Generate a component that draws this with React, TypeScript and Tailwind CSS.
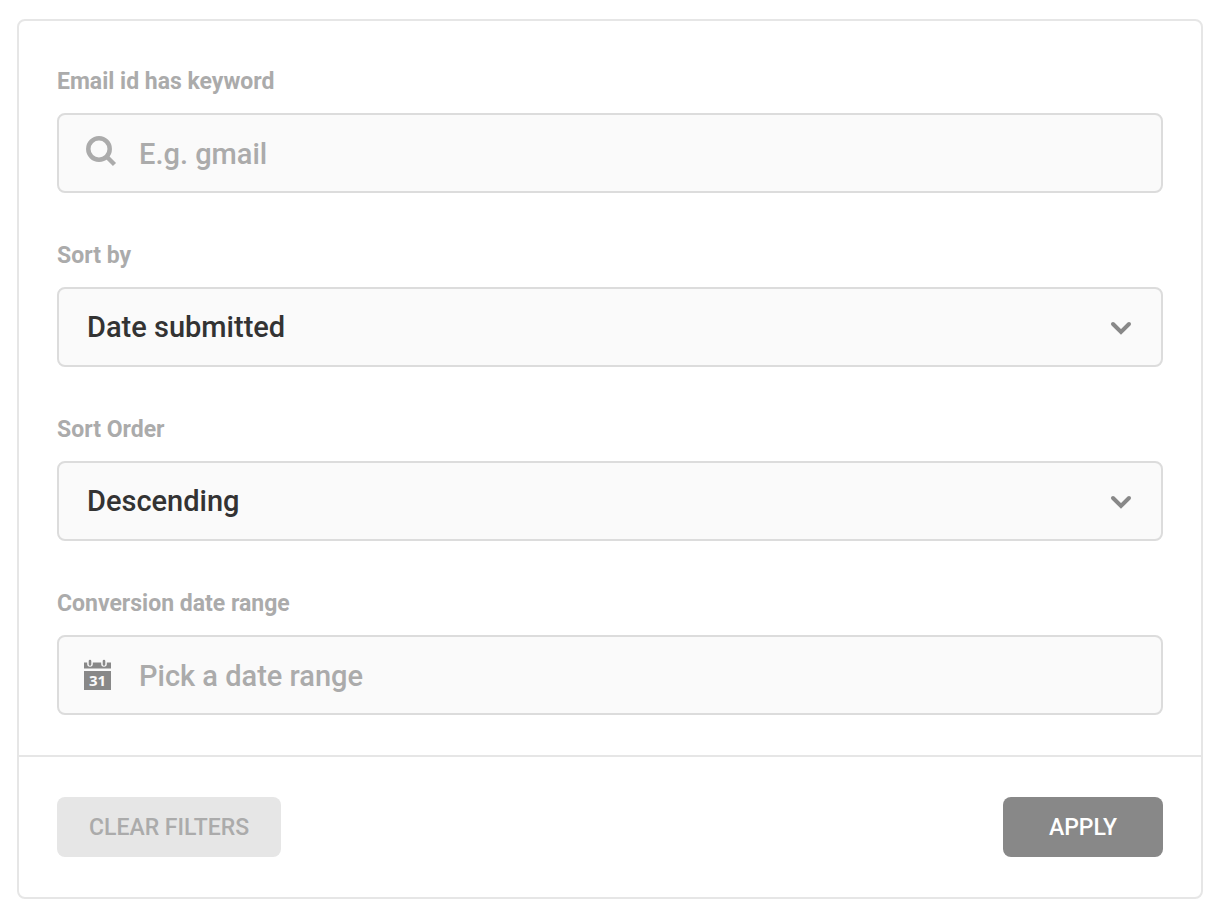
import { useState } from "react";
import type { ReactNode } from "react";

const selects = [
  {
    id: "sort-by",
    label: "Sort by",
    options: ["Date submitted", "Email id"],
  },
  {
    id: "sort-order",
    label: "Sort Order",
    options: ["Descending", "Ascending"],
  },
];

const boxClass =
  "h-20 w-full rounded-lg border-2 border-[#dcdcdc] bg-[#fafafa] pt-0.5 text-[29px] font-medium text-[#333333] outline-none placeholder:text-[#ababab] focus:border-[#b5b5b5]";

const SearchIcon = () => (
  <svg viewBox="0 0 32 32" className="h-8 w-8" fill="none" stroke="#ababab" aria-hidden="true">
    <circle cx="14" cy="14" r="10.7" strokeWidth="4.5" />
    <path d="M21.5 21.5l8 8" strokeWidth="4.5" />
  </svg>
);

const CalendarIcon = () => (
  <svg viewBox="0 0 28 32" className="h-8 w-7" fill="#888888" aria-hidden="true">
    <path d="M1 3.5h27v6H1z" />
    <path d="M1 12h27v19H1z" />
    <g fill="none" strokeLinecap="round">
      <path d="M7 0v5M21 0v5" stroke="#fafafa" strokeWidth="5.6" />
      <path d="M7 2v3.5M21 2v3.5" stroke="#888888" strokeWidth="2.6" />
    </g>
    <text
      x="14.5"
      y="27"
      textAnchor="middle"
      fontFamily="Open Sans, sans-serif"
      fontSize="15"
      fontWeight="700"
      fill="#fafafa"
    >
      31
    </text>
  </svg>
);

const ChevronIcon = () => (
  <svg
    viewBox="0 0 22 14"
    className="pointer-events-none absolute top-[34px] right-[31px] h-[14px] w-[22px]"
    fill="none"
    stroke="#888888"
    strokeWidth="4"
    strokeLinecap="round"
    aria-hidden="true"
  >
    <path d="M3 3l8 8 8-8" />
  </svg>
);

const Field = ({ id, label, children }: { id: string; label: string; children: ReactNode }) => (
  <div>
    <label htmlFor={id} className="block pt-0.5 text-[23px] leading-8 font-bold text-[#ababab]">
      {label}
    </label>
    <div className="relative mt-[15px]">{children}</div>
  </div>
);

const App = () => {
  const [keyword, setKeyword] = useState("");
  const [range, setRange] = useState("");
  const [sort, setSort] = useState<Record<string, string>>({
    "sort-by": "Date submitted",
    "sort-order": "Descending",
  });

  const clearFilters = () => {
    setKeyword("");
    setRange("");
    setSort({ "sort-by": "Date submitted", "sort-order": "Descending" });
  };

  return (
    <main className="bg-white px-[17px] py-[19px] font-[Roboto,sans-serif]">
      <form
        onSubmit={(e) => e.preventDefault()}
        className="rounded-lg border-2 border-[#e6e6e6] bg-white"
      >
        <div className="flex flex-col gap-[45px] px-[38px] pt-[43px] pb-10">
          <Field id="keyword" label="Email id has keyword">
            <span className="absolute top-[22px] left-[28px]">
              <SearchIcon />
            </span>
            <input
              id="keyword"
              type="text"
              value={keyword}
              onChange={(e) => setKeyword(e.target.value)}
              placeholder="E.g. gmail"
              className={`${boxClass} pr-6 pl-20`}
            />
          </Field>

          {selects.map((item) => (
            <Field key={item.id} id={item.id} label={item.label}>
              <select
                id={item.id}
                value={sort[item.id]}
                onChange={(e) => setSort({ ...sort, [item.id]: e.target.value })}
                className={`${boxClass} appearance-none pr-16 pl-7`}
              >
                {item.options.map((option) => (
                  <option key={option}>{option}</option>
                ))}
              </select>
              <ChevronIcon />
            </Field>
          ))}

          <Field id="range" label="Conversion date range">
            <span className="absolute top-[24px] left-[26px]">
              <CalendarIcon />
            </span>
            <input
              id="range"
              type="text"
              value={range}
              onChange={(e) => setRange(e.target.value)}
              placeholder="Pick a date range"
              className={`${boxClass} pr-6 pl-20`}
            />
          </Field>
        </div>

        <div className="flex items-center justify-between border-t-2 border-[#e6e6e6] px-[38px] py-10">
          <button
            type="button"
            onClick={clearFilters}
            className="h-[60px] rounded-lg bg-[#e6e6e6] px-8 pt-0.5 text-[23px] font-medium text-[#ababab]"
          >
            CLEAR FILTERS
          </button>
          <button
            type="submit"
            className="h-[60px] w-40 rounded-lg bg-[#888888] pt-0.5 text-[23px] font-medium text-white"
          >
            APPLY
          </button>
        </div>
      </form>
    </main>
  );
};

export default App;
